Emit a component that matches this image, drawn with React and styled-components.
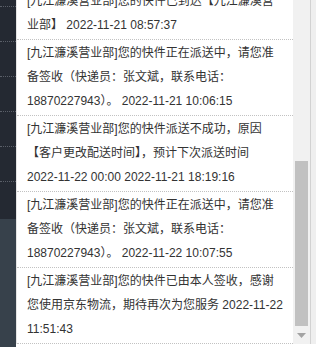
import styled, { createGlobalStyle } from "styled-components"

const GlobalStyle = createGlobalStyle`
  html, body {
    margin: 0;
    padding: 0;
    background: #fff;
    overflow: hidden;
  }
  body {
    font-family: "Liberation Sans", Arial, "Noto Sans CJK SC", sans-serif;
  }
`

// tracking events, oldest first; the list is scrolled to the bottom
const traces = [
  { text: "[九江濂溪营业部]您的快件已到达【九江濂溪营业部】", time: "2022-11-21 08:12:04" },
  { text: "[九江濂溪营业部]您的快件已到达【九江濂溪营业部】", time: "2022-11-21 08:57:37" },
  { text: "[九江濂溪营业部]您的快件正在派送中，请您准备签收（快递员：张文斌，联系电话：18870227943）。", time: "2022-11-21 10:06:15" },
  { text: "[九江濂溪营业部]您的快件派送不成功，原因【客户更改配送时间】，预计下次派送时间", extra: "2022-11-22 00:00", time: "2022-11-21 18:19:16" },
  { text: "[九江濂溪营业部]您的快件正在派送中，请您准备签收（快递员：张文斌，联系电话：18870227943）。", time: "2022-11-22 10:07:55" },
  { text: "[九江濂溪营业部]您的快件已由本人签收，感谢您使用京东物流，期待再次为您服务", time: "2022-11-22 11:51:43" },
]

const menu = [1, 2, 3, 4, 5, 6, 7]

const App = () => {
  return (
    <>
      <GlobalStyle />
      <Page>
        <Sidebar>
          <SideMenu>
            {menu.map(i => <MenuItem key={i} />)}
            <MenuItem last />
          </SideMenu>
          <SideFoot />
        </Sidebar>
        <Panel>
          <TraceList>
            {traces.map((t, i) => {
              const [day, clock] = t.time.split(" ")
              return (
                <TraceItem key={i}>
                  {t.text}
                  {t.extra && <> <Stamp>{t.extra.split(" ")[0]}</Stamp> {t.extra.split(" ")[1]}</>}
                  {" "}<Stamp>{day}</Stamp> {clock}
                </TraceItem>
              )
            })}
          </TraceList>
          <ScrollBar>
            <Thumb top={161} height={165} />
            <ArrowDown>
              <svg width="9" height="5" viewBox="0 0 9 5">
                <path d="M0 0 L9 0 L4.5 5 Z" fill="#a3a3a3" />
              </svg>
            </ArrowDown>
          </ScrollBar>
          <Edge />
          <Gutter />
        </Panel>
      </Page>
    </>
  )
}
export default App

const Page = styled.div`
  width: 325px;
  height: 347px;
  display: flex;
  align-items: flex-start;
  background: #fff;
`
const Sidebar = styled.div`
  width: 16px;
  height: 347px;
  display: flex;
  flex-direction: column;
  flex: 0 0 16px;
`
const SideMenu = styled.div`
  height: 219px;
  overflow: hidden;
  display: flex;
  flex-direction: column;
  justify-content: flex-end;
  background: #242932;
`
const MenuItem = styled.div`
  flex: 0 0 ${p => (p.last ? "37px" : "35px")};
  box-sizing: border-box;
  border-bottom: ${p => (p.last ? "none" : "1px dotted #5a5f68")};
`
const SideFoot = styled.div`
  flex: 1;
  background: #37414b;
`
const Panel = styled.div`
  height: 344px;
  display: flex;
  border-left: 1px solid #e4e4e4;
`
const TraceList = styled.div`
  width: 276px;
  flex: 0 0 276px;
  overflow: hidden;
  display: flex;
  flex-direction: column;
  justify-content: flex-end;
`
const TraceItem = styled.div`
  flex: 0 0 auto;
  padding: 1px 8px 2px 10px;
  border-bottom: 1px dotted #c2c2c2;
  font-size: 12px;
  line-height: 24px;
  color: #333;
`
const Stamp = styled.span`
  white-space: nowrap;
`
const ScrollBar = styled.div`
  width: 17px;
  flex: 0 0 17px;
  display: flex;
  flex-direction: column;
  align-items: center;
  background: #f1f1f1;
`
const Thumb = styled.div`
  width: 13px;
  margin-top: ${p => p.top}px;
  height: ${p => p.height}px;
  background: #c1c1c1;
`
const ArrowDown = styled.div`
  margin-top: auto;
  height: 17px;
  width: 17px;
  display: flex;
  align-items: center;
  justify-content: center;
`
const Edge = styled.div`
  width: 1px;
  flex: 0 0 1px;
  background: #d2d2d2;
`
const Gutter = styled.div`
  width: 5px;
  flex: 0 0 5px;
  background: #efefef;
`
